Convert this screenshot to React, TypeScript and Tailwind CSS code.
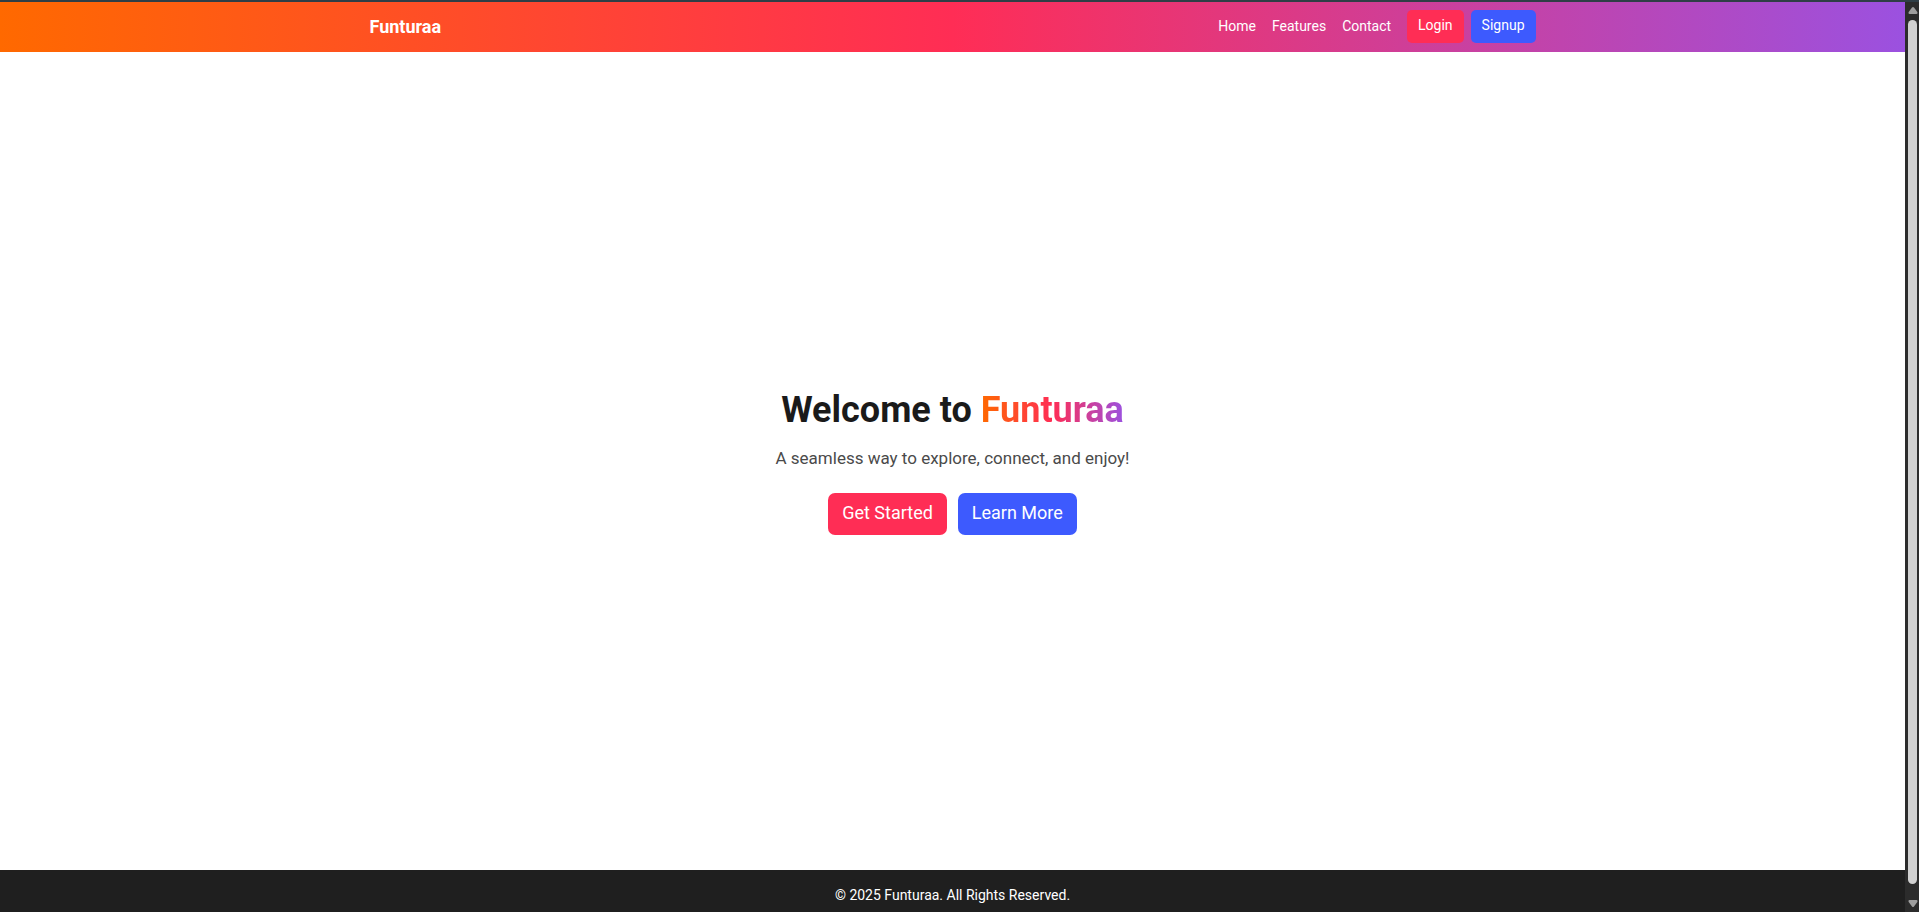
const links = ["Home", "Features", "Contact"];

function Navbar() {
  return (
    <header className="bg-linear-to-r/srgb from-[#ff6900] via-[#ff2d55] to-[#9b51e0] text-white">
      <div className="mx-auto flex h-[50px] w-full max-w-[1198px] items-center justify-between px-4">
        <a href="#" className="text-lg font-bold">
          Funturaa
        </a>
        <nav className="flex items-center gap-4 pb-0.5 text-sm">
          {links.map((label) => (
            <a key={label} href={`#${label.toLowerCase()}`}>
              {label}
            </a>
          ))}
          <div className="flex gap-[7px]">
            <button type="button" className="h-[33px] rounded-[5px] bg-[#ff2d55] px-[11px] pb-0.5">
              Login
            </button>
            <button type="button" className="h-[33px] rounded-[5px] bg-[#3d5afe] px-[11px] pb-0.5">
              Signup
            </button>
          </div>
        </nav>
      </div>
    </header>
  );
}

function Hero() {
  return (
    <main className="flex grow flex-col items-center justify-center bg-white pt-0.5">
      <h1 className="text-4xl font-bold text-[#1a1a1a]">
        Welcome to{" "}
        <span className="bg-linear-to-r/srgb from-[#ff6900] via-[#ff2d55] to-[#9b51e0] bg-clip-text text-transparent">
          Funturaa
        </span>
      </h1>
      <p className="mt-4 text-[17px] leading-6 text-[#4a4a4a]">
        A seamless way to explore, connect, and enjoy!
      </p>
      <div className="mt-[23px] flex gap-[11px] text-lg text-white">
        <button type="button" className="h-[42px] rounded-[7px] bg-[#ff2d55] px-[14px] pb-0.5">
          Get Started
        </button>
        <button type="button" className="h-[42px] rounded-[7px] bg-[#3d5afe] px-[14px] pb-0.5">
          Learn More
        </button>
      </div>
    </main>
  );
}

function ScrollTrack() {
  return (
    <div aria-hidden="true" className="flex w-[14px] shrink-0 flex-col items-center bg-[#2c2c2c] pt-[5px] pb-[5px] pl-px">
      <svg width="10" height="7" viewBox="0 0 10 7" fill="#9f9f9f">
        <path d="M4 0.5Q5 -0.5 6 0.5L9.3 5Q10 7 8.5 7H1.5Q0 7 0.7 5Z" />
      </svg>
      <div className="mt-[6px] mb-4 w-[9px] grow rounded-full bg-[#d1d1d1]" />
      <svg width="10" height="7" viewBox="0 0 10 7" fill="#9f9f9f">
        <path d="M4 6.5Q5 7.5 6 6.5L9.3 2Q10 0 8.5 0H1.5Q0 0 0.7 2Z" />
      </svg>
    </div>
  );
}

export default function App() {
  return (
    <div className="flex min-h-screen border-t-2 border-[#2f3e46] font-[Roboto,sans-serif]">
      <div className="flex min-w-0 grow flex-col">
        <Navbar />
        <Hero />
        <footer className="bg-[#1f1f1f] pt-[15px] pb-[7px] text-center text-sm text-white">
          © 2025 Funturaa. All Rights Reserved.
        </footer>
      </div>
      <ScrollTrack />
    </div>
  );
}
